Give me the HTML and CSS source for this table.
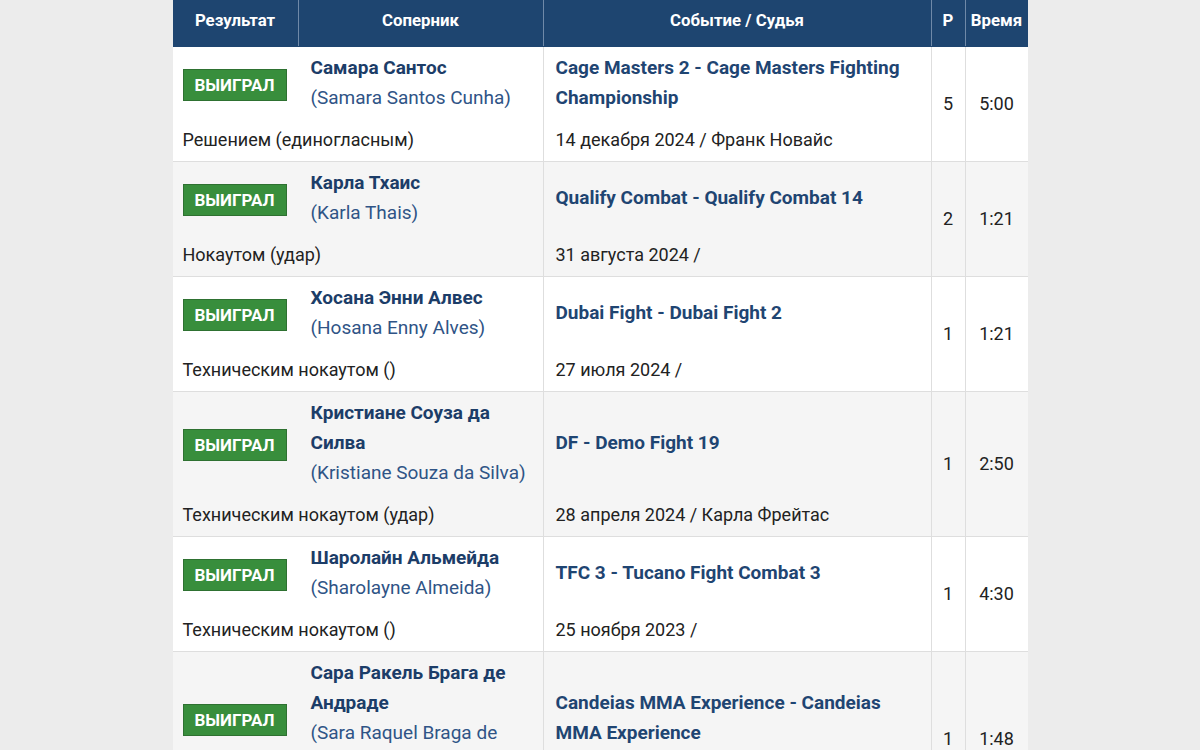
FILE: index.html
```html
<!DOCTYPE html>
<html lang="ru">
<head>
<meta charset="utf-8">
<title>Бои</title>
<link rel="stylesheet" href="styles.css">
</head>
<body>
<div class="fights">
  <div class="head">
    <div class="h h-res">Результат</div>
    <div class="h">Соперник</div>
    <div class="h">Событие / Судья</div>
    <div class="h">Р</div>
    <div class="h">Время</div>
  </div>

  <div class="row">
    <div class="fighter"><span class="badge">ВЫИГРАЛ</span><div class="names"><div class="name">Самара Сантос</div><div class="orig">(Samara Santos Cunha)</div></div></div>
    <div class="method">Решением (единогласным)</div>
    <div class="event">Cage Masters 2 - Cage Masters Fighting Championship</div>
    <div class="date">14 декабря 2024 / Франк Новайс</div>
    <div class="num rnd">5</div>
    <div class="num tm">5:00</div>
  </div>

  <div class="row alt">
    <div class="fighter"><span class="badge">ВЫИГРАЛ</span><div class="names"><div class="name">Карла Тхаис</div><div class="orig">(Karla Thais)</div></div></div>
    <div class="method">Нокаутом (удар)</div>
    <div class="event">Qualify Combat - Qualify Combat 14</div>
    <div class="date">31 августа 2024 /</div>
    <div class="num rnd">2</div>
    <div class="num tm">1:21</div>
  </div>

  <div class="row">
    <div class="fighter"><span class="badge">ВЫИГРАЛ</span><div class="names"><div class="name">Хосана Энни Алвес</div><div class="orig">(Hosana Enny Alves)</div></div></div>
    <div class="method">Техническим нокаутом ()</div>
    <div class="event">Dubai Fight - Dubai Fight 2</div>
    <div class="date">27 июля 2024 /</div>
    <div class="num rnd">1</div>
    <div class="num tm">1:21</div>
  </div>

  <div class="row alt">
    <div class="fighter"><span class="badge">ВЫИГРАЛ</span><div class="names"><div class="name">Кристиане Соуза да Силва</div><div class="orig">(Kristiane Souza da Silva)</div></div></div>
    <div class="method">Техническим нокаутом (удар)</div>
    <div class="event">DF - Demo Fight 19</div>
    <div class="date">28 апреля 2024 / Карла Фрейтас</div>
    <div class="num rnd">1</div>
    <div class="num tm">2:50</div>
  </div>

  <div class="row">
    <div class="fighter"><span class="badge">ВЫИГРАЛ</span><div class="names"><div class="name">Шаролайн Альмейда</div><div class="orig">(Sharolayne Almeida)</div></div></div>
    <div class="method">Техническим нокаутом ()</div>
    <div class="event">TFC 3 - Tucano Fight Combat 3</div>
    <div class="date">25 ноября 2023 /</div>
    <div class="num rnd">1</div>
    <div class="num tm">4:30</div>
  </div>

  <div class="row alt">
    <div class="fighter"><span class="badge">ВЫИГРАЛ</span><div class="names"><div class="name">Сара Ракель Брага де Андраде</div><div class="orig">(Sara Raquel Braga de Andrade)</div></div></div>
    <div class="method">Решением (единогласным)</div>
    <div class="event">Candeias MMA Experience - Candeias MMA Experience</div>
    <div class="date">9 сентября 2023 /</div>
    <div class="num rnd">1</div>
    <div class="num tm">1:48</div>
  </div>
</div>
</body>
</html>
```

FILE: styles.css
```css
html, body {
  margin: 0;
  padding: 0;
  background: #ececec;
}

body {
  font-family: Roboto, "Liberation Sans", Arial, sans-serif;
  color: #222;
  font-size: 18px;
  line-height: 30px;
}

.fights {
  width: 855px;
  margin: 0 auto;
  background: #fff;
}

.head {
  display: grid;
  grid-template-columns: 125px 245px 388px 34px 63px;
  background: #1e4570;
  color: #fff;
  border-bottom: 1px solid #1e4570;
}

.h {
  font-weight: 700;
  font-size: 16.8px;
  line-height: 24px;
  padding: 8px 0 14px;
  text-align: center;
  border-left: 1px solid #6f89a8;
}

.h-res {
  border-left: none;
}

.row {
  display: grid;
  grid-template-columns: 371px 387px 34px 63px;
  grid-template-rows: auto auto;
  background: #fff;
  border-bottom: 1px solid #dedede;
}

.row.alt {
  background: #f5f5f5;
}

.fighter {
  grid-column: 1;
  grid-row: 1;
  display: flex;
  align-items: center;
  gap: 24px;
  padding: 6px 10px 0;
  border-right: 1px solid #dedede;
}

.badge {
  flex: 0 0 auto;
  box-sizing: border-box;
  width: 104px;
  height: 32px;
  margin-top: 4px;
  background: #388e3c;
  border: 1px solid #2e7131;
  color: #fff;
  font-weight: 700;
  font-size: 17px;
  line-height: 30px;
  text-align: center;
}

.names {
  flex: 1 1 auto;
  min-width: 0;
}

.name {
  font-weight: 700;
  font-size: 19px;
  color: #1c3d68;
}

.orig {
  font-size: 19px;
  color: #2f5486;
}

.method {
  grid-column: 1;
  grid-row: 2;
  padding: 12px 10px 6px;
  border-right: 1px solid #dedede;
}

.event {
  grid-column: 2;
  grid-row: 1;
  display: flex;
  align-items: center;
  padding: 6px 12px 0;
  font-weight: 700;
  font-size: 19px;
  color: #1f4572;
}

.date {
  grid-column: 2;
  grid-row: 2;
  padding: 12px 12px 6px;
}

.num {
  grid-row: 1 / 3;
  display: flex;
  align-items: center;
  justify-content: center;
  border-left: 1px solid #dedede;
}

.rnd {
  grid-column: 3;
}

.tm {
  grid-column: 4;
}
```
